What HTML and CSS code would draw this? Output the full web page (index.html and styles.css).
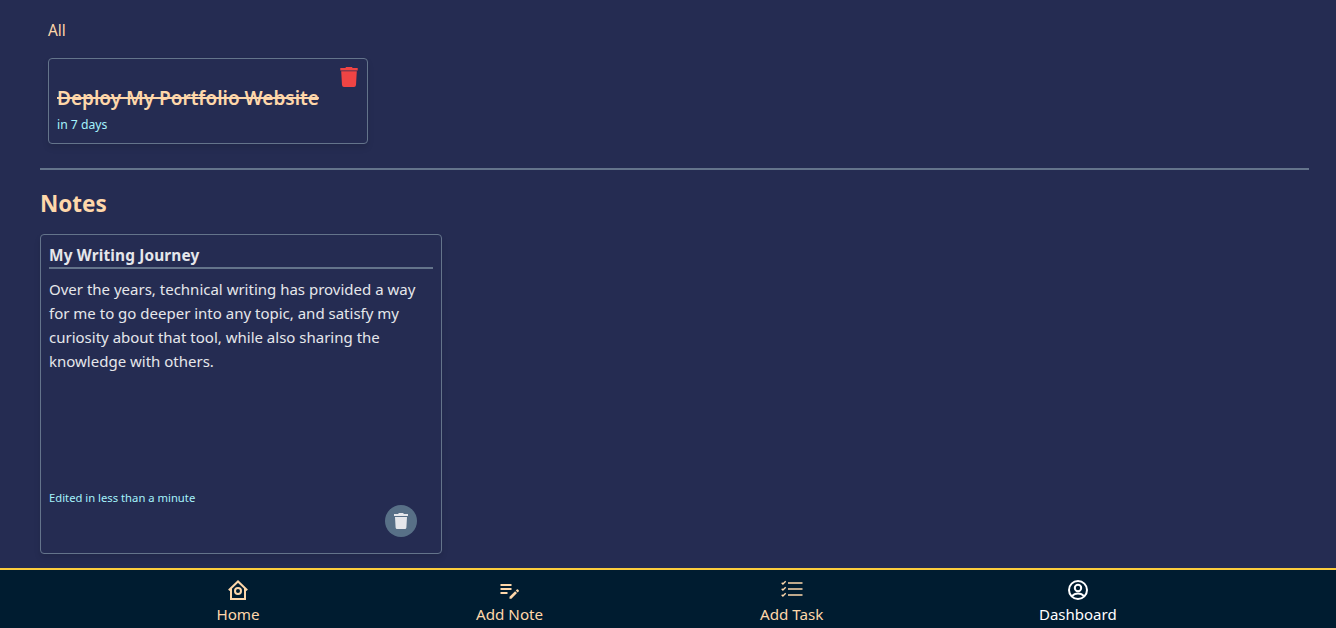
FILE: index.html
```
<!DOCTYPE html>
<html lang="en">
<head>
<meta charset="utf-8">
<title>Dashboard</title>
<link rel="stylesheet" href="styles.css">
</head>
<body>
<main class="content">
  <section class="tasks">
    <div class="filter">All</div>
    <article class="task">
      <svg class="task-delete" viewBox="0 0 18 20"><path d="M.3 1H5.4L6 0H12L12.6 1H17.7V3.4H.3ZM1.2 4.3H16.8L16 18Q15.8 20 14 20H4Q2.2 20 2 18Z"/></svg>
      <h3 class="task-title">Deploy My Portfolio Website</h3>
      <p class="task-due">in 7 days</p>
    </article>
  </section>
  <section class="notes">
    <h2 class="heading">Notes</h2>
    <article class="note">
      <h3 class="note-title">My Writing Journey</h3>
      <p class="note-body">Over the years, technical writing has provided a way<br>for me to go deeper into any topic, and satisfy my<br>curiosity about that tool, while also sharing the<br>knowledge with others.</p>
      <p class="note-time">Edited in less than a minute</p>
      <button class="note-delete" aria-label="Delete note"><svg viewBox="0 0 14 16"><path d="M0 1H4.2L4.8 0H9.2L9.8 1H14V3H0ZM1 4H13L12.4 14.5Q12.2 16 11 16H3Q1.8 16 1.6 14.5Z"/></svg></button>
    </article>
  </section>
</main>
<nav class="nav">
  <a class="item home">
    <svg class="icon" viewBox="0 0 20 20"><path d="M.8 10.2 10 1.5l9.2 8.7M3 8.6V19h14V8.6"/><circle cx="10" cy="11" r="3"/></svg>
    <span class="label">Home</span>
  </a>
  <a class="item add-note">
    <svg class="icon solid" viewBox="0 0 20 20"><path d="M.5 4h11v2H.5zM.5 8h11v2H.5zM.5 12h7v2h-7zM9.5 16.8l5.6-5.6 1.9 1.9-5.6 5.6H9.5zM15.8 10.5l1-1q.6-.5 1.2 0l.7.7q.5.6 0 1.2l-1 1z"/></svg>
    <span class="label">Add Note</span>
  </a>
  <a class="item add-task">
    <svg class="icon wide" viewBox="0 0 22 20"><path d="M7 3h14.5M7 9h14.5M7 15h14.5M.7 2.8l1.2 1.2L4.7 1.2M.7 8.8l1.2 1.2 2.8-2.8M.7 14.8l1.2 1.2 2.8-2.8"/></svg>
    <span class="label">Add Task</span>
  </a>
  <a class="item dashboard active">
    <svg class="icon" viewBox="0 0 20 20"><circle cx="10" cy="10" r="9"/><circle cx="10" cy="8" r="3.2"/><path d="M4.2 16q2-2.6 5.8-2.6t5.8 2.6"/></svg>
    <span class="label">Dashboard</span>
  </a>
</nav>
</body>
</html>
```
FILE: styles.css
```
* { box-sizing: border-box; }
body {
  margin: 0;
  height: 628px;
  overflow: hidden;
  display: flex;
  flex-direction: column;
  background: #252c52;
  color: #fed7aa;
  font-family: "Noto Sans", "Open Sans", sans-serif;
  font-size: 15px;
  line-height: 24px;
}
h2, h3, p { margin: 0; white-space: nowrap; }
.content { height: 568px; padding: 0 27px 0 40px; }
.tasks {
  height: 170px;
  padding: 18px 8px 0;
  border-bottom: 2px solid #64748b;
}
.filter { height: 40px; font-size: 15.4px; padding-top: 1px; }
.task {
  position: relative;
  width: 320px;
  height: 86px;
  padding: 25px 8px 0;
  border: 1px solid #64748b;
  border-radius: 4px;
  box-shadow: 0 4px 6px rgba(0, 0, 0, .1);
}
.task-delete {
  position: absolute;
  top: 8px;
  right: 9px;
  width: 18px;
  height: 20px;
  fill: #ef4444;
}
.task-title {
  height: 28px;
  font-size: 19px;
  line-height: 28px;
  font-weight: 600;
  text-decoration: line-through;
  text-decoration-thickness: 2px;
}
.task-due { padding-top: 1px; font-size: 12.2px; line-height: 24px; color: #a5f3fc; }
.heading { padding-top: 18px; height: 64px; font-size: 22.5px; line-height: 32px; font-weight: 700; }
.note {
  position: relative;
  width: 402px;
  height: 320px;
  padding: 8px;
  border: 1px solid #64748b;
  border-radius: 4px;
  box-shadow: 0 4px 6px rgba(0, 0, 0, .1);
  color: #e5e7eb;
}
.note-title {
  height: 26px;
  padding-top: 1px;
  border-bottom: 2px solid #64748b;
  font-size: 15.4px;
  letter-spacing: .15px;
  font-weight: 700;
}
.note-body { height: 212px; padding-top: 8px; }
.note-time { height: 32px; padding-top: 9px; font-size: 11.25px; line-height: 16px; color: #a5f3fc; }
.note-delete {
  position: absolute;
  right: 24px;
  bottom: 16px;
  display: grid;
  place-items: center;
  width: 32px;
  height: 32px;
  padding: 0;
  border: 0;
  border-radius: 50%;
  background: #587087;
}
.note-delete svg { width: 14px; height: 16px; fill: #e5e7eb; }
.nav {
  height: 60px;
  display: flex;
  gap: 215.6px;
  padding-left: 216.5px;
  border-top: 2px solid #fccd3e;
  background: #001c30;
}
.item { display: flex; flex-direction: column; align-items: center; flex: none; padding-top: 10px; }
.home { width: 43px; }
.add-note { width: 69px; }
.add-task { width: 64px; }
.dashboard { width: 77px; }
.active { color: #fff; }
.icon {
  width: 20px;
  height: 20px;
  margin-bottom: 2px;
  fill: none;
  stroke: currentColor;
  stroke-width: 2;
}
.solid { fill: currentColor; stroke: none; }
.wide { width: 22px; stroke-width: 1.4; }
.label { line-height: 24px; font-size: 15.2px; white-space: nowrap; }
.dashboard .label { font-size: 15px; }
```
